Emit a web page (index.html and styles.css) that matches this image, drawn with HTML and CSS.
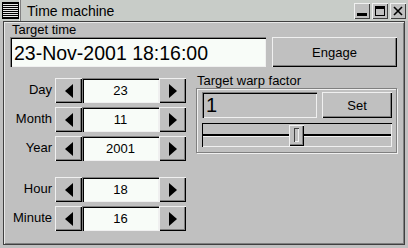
FILE: index.html
```html
<!DOCTYPE html>
<html>
<head>
  <title>Time machine</title>
  <link rel="stylesheet" href="styles.css">
</head>
<body>
  <div class="window">
    <div class="titlebar">
      <div class="menu-btn"><div class="menu-lines"></div></div>
      <div class="title">Time machine</div>
      <div class="tb-buttons">
        <div class="tb-btn">
          <svg width="10" height="10" viewBox="0 0 10 10"><rect x="0" y="7" width="10" height="3" fill="#000"/></svg>
        </div>
        <div class="tb-btn">
          <svg width="10" height="10" viewBox="0 0 10 10"><rect x="0.5" y="0.5" width="9" height="9" fill="none" stroke="#000"/><rect x="0" y="0" width="10" height="3" fill="#000"/></svg>
        </div>
        <div class="tb-btn">
          <svg width="10" height="10" viewBox="0 0 10 10"><path d="M1 1 L9 9 M9 1 L1 9" stroke="#000" stroke-width="1.6"/></svg>
        </div>
      </div>
    </div>

    <div class="frame">
      <div class="label">Target time</div>
      <div class="top-row">
        <div class="entry big-entry">23-Nov-2001 18:16:00</div>
        <button class="button engage">Engage</button>
      </div>

      <div class="main">
        <div class="spins">
          <div class="spin">
            <span class="spin-label">Day</span>
            <button class="button arrow"><svg width="8" height="14" viewBox="0 0 8 14"><polygon points="8,0 8,14 0,7" fill="#000"/></svg></button>
            <div class="entry spin-value">23</div>
            <button class="button arrow"><svg width="8" height="14" viewBox="0 0 8 14"><polygon points="0,0 0,14 8,7" fill="#000"/></svg></button>
          </div>
          <div class="spin">
            <span class="spin-label">Month</span>
            <button class="button arrow"><svg width="8" height="14" viewBox="0 0 8 14"><polygon points="8,0 8,14 0,7" fill="#000"/></svg></button>
            <div class="entry spin-value">11</div>
            <button class="button arrow"><svg width="8" height="14" viewBox="0 0 8 14"><polygon points="0,0 0,14 8,7" fill="#000"/></svg></button>
          </div>
          <div class="spin">
            <span class="spin-label">Year</span>
            <button class="button arrow"><svg width="8" height="14" viewBox="0 0 8 14"><polygon points="8,0 8,14 0,7" fill="#000"/></svg></button>
            <div class="entry spin-value">2001</div>
            <button class="button arrow"><svg width="8" height="14" viewBox="0 0 8 14"><polygon points="0,0 0,14 8,7" fill="#000"/></svg></button>
          </div>
          <div class="spin spin-gap">
            <span class="spin-label">Hour</span>
            <button class="button arrow"><svg width="8" height="14" viewBox="0 0 8 14"><polygon points="8,0 8,14 0,7" fill="#000"/></svg></button>
            <div class="entry spin-value">18</div>
            <button class="button arrow"><svg width="8" height="14" viewBox="0 0 8 14"><polygon points="0,0 0,14 8,7" fill="#000"/></svg></button>
          </div>
          <div class="spin spin-last">
            <span class="spin-label">Minute</span>
            <button class="button arrow"><svg width="8" height="14" viewBox="0 0 8 14"><polygon points="8,0 8,14 0,7" fill="#000"/></svg></button>
            <div class="entry spin-value">16</div>
            <button class="button arrow"><svg width="8" height="14" viewBox="0 0 8 14"><polygon points="0,0 0,14 8,7" fill="#000"/></svg></button>
          </div>
        </div>

        <div class="warp">
          <div class="label warp-label">Target warp factor</div>
          <div class="group">
            <div class="warp-row">
              <div class="entry warp-entry">1</div>
              <button class="button set">Set</button>
            </div>
            <div class="slider">
              <div class="track"></div>
              <div class="handle"><div class="slot"></div></div>
            </div>
          </div>
        </div>
      </div>
    </div>
  </div>
</body>
</html>
```

FILE: styles.css
```css
* {
  box-sizing: border-box;
}
body {
  margin: 0;
  background-color: #c0c0c0;
  font-family: "Liberation Sans", Arial, sans-serif;
  font-size: 13px;
  color: #000;
}
button {
  font-family: inherit;
  font-size: 13px;
  color: #000;
  padding: 0;
  margin: 0;
  border: none;
}
.window {
  width: 408px;
  height: 248px;
  display: flex;
  flex-direction: column;
}

/* title bar */
.titlebar {
  height: 21px;
  display: flex;
  align-items: center;
  background-color: #c8ccc8;
}
.menu-btn {
  width: 21px;
  height: 21px;
  padding: 2px;
  border-right: 1px solid #808080;
  box-shadow: inset -1px 0 0 #e8e8e8;
}
.menu-lines {
  width: 17px;
  height: 17px;
  border: 1px solid #000;
  background: repeating-linear-gradient(to bottom, #000 0, #000 1px, #e8e8e8 1px, #e8e8e8 2px);
}
.title {
  margin-left: 6px;
  font-size: 14px;
}
.tb-buttons {
  margin-left: auto;
  margin-right: 2px;
  display: flex;
  gap: 2px;
}
.tb-btn {
  width: 16px;
  height: 16px;
  display: flex;
  align-items: center;
  justify-content: center;
  background-color: #c0c0c0;
  box-shadow: inset 1px 1px 0 #f0f0f0, inset -1px -1px 0 #404040;
}

/* main frame */
.frame {
  height: 224px;
  margin: 0 3px;
  padding: 0 6px;
  border: 1px solid #404040;
  box-shadow: inset 1px 1px 0 #e8e8e8, inset -1px -1px 0 #808080;
}
.label {
  line-height: 15px;
  padding-left: 2px;
}
.top-row {
  display: flex;
  gap: 6px;
}

/* bevels */
.button {
  background-color: #c0c0c0;
  box-shadow: inset 1px 1px 0 #f0f0f0, inset -1px -1px 0 #000, inset -2px -2px 0 #808080;
}
.entry {
  background-color: #f8fcf8;
  box-shadow: inset 1px 1px 0 #808080, inset 2px 2px 0 #000, inset -1px -1px 0 #f0f0f0;
}

.big-entry {
  width: 256px;
  height: 30px;
  padding: 4px 0 0 4px;
  font-size: 19.5px;
  line-height: 24px;
}
.engage {
  width: 125px;
  height: 30px;
}

.main {
  display: flex;
}

/* spin rows */
.spins {
  margin-top: 11px;
}
.spin {
  display: grid;
  grid-template-columns: 45px 27px 77px 27px;
  height: 24px;
  margin-bottom: 5px;
}
.spin-gap {
  margin-top: 17px;
}
.spin-last {
  margin-top: 1px;
}
.spin-label {
  text-align: right;
  padding-right: 3px;
  line-height: 24px;
}
.arrow {
  display: flex;
  align-items: center;
  justify-content: center;
}
.spin-value {
  text-align: center;
  line-height: 25px;
}

/* warp factor */
.warp {
  margin-top: 6px;
  margin-left: 10px;
}
.warp-label {
  padding-left: 1px;
}
.group {
  width: 201px;
  height: 65px;
  padding: 3px 4px 0 5px;
  border: 1px solid #808080;
  box-shadow: inset 1px 1px 0 #f0f0f0, 1px 1px 0 #f0f0f0;
}
.warp-row {
  display: flex;
  gap: 5px;
}
.warp-entry {
  width: 115px;
  height: 26px;
  padding-left: 4px;
  background-color: #c0c0c0;
  font-size: 20px;
  line-height: 27px;
}
.set {
  width: 70px;
  height: 26px;
}
.slider {
  position: relative;
  width: 190px;
  height: 24px;
  margin-top: 5px;
  box-shadow: inset 1px 1px 0 #000, inset -1px -1px 0 #f0f0f0;
}
.track {
  position: absolute;
  left: 1px;
  right: 1px;
  top: 11px;
  height: 2px;
  background-color: #000;
  box-shadow: 0 1px 0 #f0f0f0;
}
.handle {
  position: absolute;
  left: 87px;
  top: 2px;
  width: 15px;
  height: 21px;
  background-color: #c0c0c0;
  box-shadow: inset 1px 1px 0 #f0f0f0, inset -1px -1px 0 #000, inset -2px -2px 0 #808080;
}
.slot {
  position: absolute;
  left: 5px;
  top: 3px;
  width: 5px;
  height: 14px;
  box-shadow: inset 1px 1px 0 #404040, inset -1px -1px 0 #f0f0f0;
}
```
